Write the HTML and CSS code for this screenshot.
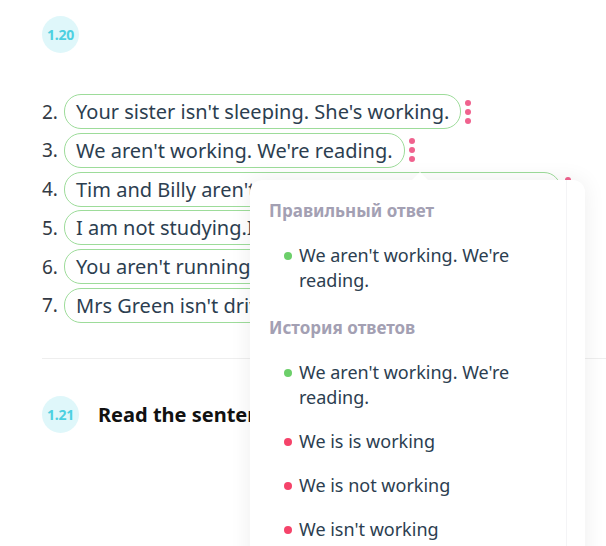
FILE: index.html
```html
<!DOCTYPE html>
<html>
<head>
<meta charset="utf-8">
<link rel="stylesheet" href="styles.css">
</head>
<body>
<div class="page">
  <section class="exercise">
    <div class="badge">1.20</div>
    <ol class="answers">
      <li class="row"><span class="num">2.</span><span class="pill">Your sister isn't sleeping. She's working.</span><span class="dots"><i></i><i></i><i></i></span></li>
      <li class="row"><span class="num">3.</span><span class="pill">We aren't working. We're reading.</span><span class="dots"><i></i><i></i><i></i></span></li>
      <li class="row"><span class="num">4.</span><span class="pill">Tim and Billy aren't playing. They're studying hard.</span><span class="dots"><i></i><i></i><i></i></span></li>
      <li class="row"><span class="num">5.</span><span class="pill">I am not studying.I'm eating.</span></li>
      <li class="row"><span class="num">6.</span><span class="pill">You aren't running. You're walking.</span></li>
      <li class="row"><span class="num">7.</span><span class="pill">Mrs Green isn't driving. She's cooking.</span></li>
    </ol>
  </section>
  <hr class="sep">
  <section class="exercise next">
    <div class="badge">1.21</div>
    <h2 class="title">Read the sentences and correct the mistakes.</h2>
  </section>

  <div class="popup">
    <div class="arrow"></div>
    <div class="popup-inner">
      <h3 class="ph">Правильный ответ</h3>
      <ul class="plist">
        <li class="ok">We aren't working. We're reading.</li>
      </ul>
      <h3 class="ph">История ответов</h3>
      <ul class="plist">
        <li class="ok">We aren't working. We're reading.</li>
        <li class="bad">We is is working</li>
        <li class="bad">We is not working</li>
        <li class="bad">We isn't working</li>
      </ul>
    </div>
  </div>
</div>
</body>
</html>
```

FILE: styles.css
```css
html, body {
  margin: 0;
  padding: 0;
  background: #ffffff;
  overflow: hidden;
}
body {
  width: 606px;
  height: 546px;
  font-family: "Noto Sans", "DejaVu Sans", sans-serif;
  color: #2c3e50;
}
.page {
  position: relative;
  padding: 16px 0 0 42px;
  height: 546px;
  box-sizing: border-box;
}
.badge {
  width: 37px;
  height: 37px;
  border-radius: 50%;
  background: #dff7fa;
  color: #4dd0e1;
  font-size: 14px;
  font-weight: 700;
  display: flex;
  align-items: center;
  justify-content: center;
  letter-spacing: -0.3px;
}
.answers {
  list-style: none;
  margin: 41px 0 0 0;
  padding: 0;
  display: flex;
  flex-direction: column;
  gap: 3.8px;
}
.row {
  display: flex;
  align-items: center;
  white-space: nowrap;
}
.num {
  width: 22px;
  font-size: 19px;
  color: #333a44;
}
.pill {
  display: inline-block;
  height: 33px;
  line-height: 33px;
  padding: 0 11px;
  border: 1px solid #9ddc9a;
  border-radius: 17px;
  font-size: 20px;
  color: #2c3e50;
}
.dots {
  display: flex;
  flex-direction: column;
  gap: 3px;
  margin-left: 4px;
}
.dots i {
  display: block;
  width: 6px;
  height: 6px;
  border-radius: 50%;
  background: #f0628e;
}
.sep {
  border: 0;
  border-top: 1px solid #eeeeee;
  margin: 35px 0 0 0;
}
.next {
  display: flex;
  align-items: center;
  gap: 19px;
  margin-top: 37px;
}
.title {
  margin: 0;
  font-size: 20px;
  font-weight: 700;
  color: #111;
  white-space: nowrap;
}
.popup {
  position: absolute;
  left: 250px;
  top: 180px;
  width: 335px;
  height: 420px;
  background: #fff;
  border-radius: 12px;
  box-shadow: 0 0 22px rgba(0, 0, 0, 0.07);
}
.arrow {
  position: absolute;
  left: 162px;
  top: -8px;
  width: 0;
  height: 0;
  border-left: 8px solid transparent;
  border-right: 8px solid transparent;
  border-bottom: 8px solid #fff;
}
.popup-inner {
  margin-right: 18px;
  padding: 19px 0 0 19px;
  border-right: 1px solid #f4f4f6;
  height: 100%;
  box-sizing: border-box;
}
.ph {
  margin: 0;
  font-size: 17px;
  line-height: 23px;
  font-weight: 700;
  color: #a3a0b3;
}
.plist {
  list-style: none;
  margin: 21px 0 23px 0;
  padding: 0 20px 0 30px;
  display: flex;
  flex-direction: column;
  gap: 19px;
}
.plist li {
  position: relative;
  font-size: 18px;
  line-height: 25px;
  color: #2c3e50;
}
.plist li::before {
  content: "";
  position: absolute;
  left: -15px;
  top: 9px;
  width: 8px;
  height: 8px;
  border-radius: 50%;
}
.plist li.ok::before { background: #6ccf6a; }
.plist li.bad::before { background: #f5436a; }
```
